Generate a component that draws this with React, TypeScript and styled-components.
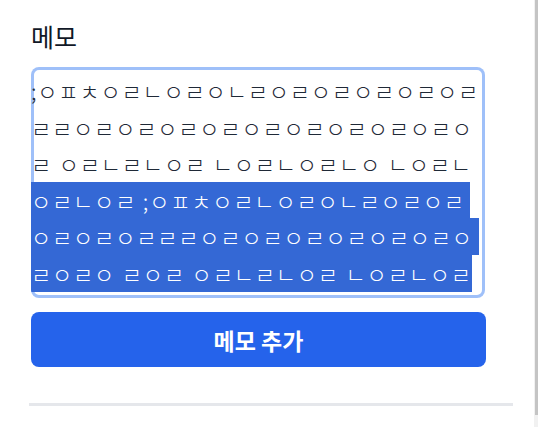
import { useLayoutEffect, useRef } from 'react';
import styled, { createGlobalStyle } from 'styled-components';

const GlobalStyle = createGlobalStyle`
  html {
    background: #fff;
  }
  body {
    margin: 0;
    font-family: "Noto Sans CJK KR", "Noto Sans", sans-serif;
    color: #111827;
  }
`;

const Shell = styled.div`
  display: flex;
  align-items: stretch;
`;

const Panel = styled.section`
  flex: 1;
  padding: 19px 21px 33px 29px;
`;

const ScrollTrack = styled.div`
  width: 4px;
  padding-left: 1px;
  box-sizing: border-box;
  background: #f1f1f1;
`;

const ScrollThumb = styled.div`
  height: 415px;
  background: #c4c4c4;
`;

const Form = styled.div`
  display: flex;
  flex-direction: column;
  width: 455px;
  padding-left: 2px;
`;

const Label = styled.label`
  display: block;
  font-size: 25px;
  line-height: 34px;
  font-weight: 400;
  color: #111827;
  margin-bottom: 14px;
`;

const MemoInput = styled.textarea`
  box-sizing: border-box;
  width: 454px;
  height: 231px;
  margin: 0;
  padding: 5px 0 0 0;
  border: none;
  border-radius: 8px;
  box-shadow: inset 0 0 0 3px #9fc0f9;
  outline: none;
  resize: none;
  overflow: hidden;
  font-family: "Noto Sans CJK KR", "Noto Sans", sans-serif;
  font-size: 22px;
  font-weight: 300;
  letter-spacing: 0.8px;
  word-spacing: 1px;
  line-height: 36.5px;
  color: #1f2937;
  background: #fff;

  &::selection {
    background: #3468d5;
    color: #fff;
  }
`;

const AddButton = styled.button`
  margin-top: 14px;
  width: 455px;
  height: 55px;
  border: none;
  border-radius: 8px;
  background: #2563eb;
  color: #fff;
  font-family: "Noto Sans CJK KR", "Noto Sans", sans-serif;
  font-size: 23px;
  font-weight: 700;
  cursor: pointer;
`;

const Divider = styled.hr`
  margin: 36px 0 0;
  width: 484px;
  height: 3px;
  border: none;
  background: #e5e7eb;
`;

const lines = [
  ';ㅇㅍㅊㅇㄹㄴㅇㄹㅇㄴㄹㅇㄹㅇㄹㅇㄹㅇㄹㅇㄹ',
  'ㄹㄹㅇㄹㅇㄹㅇㄹㅇㄹㅇㄹㅇㄹㅇㄹㅇㄹㅇㄹㅇ',
  'ㄹ ㅇㄹㄴㄹㄴㅇㄹ ㄴㅇㄹㄴㅇㄹㄴㅇ ㄴㅇㄹㄴ',
  'ㅇㄹㄴㅇㄹ ;ㅇㅍㅊㅇㄹㄴㅇㄹㅇㄴㄹㅇㄹㅇㄹ',
  'ㅇㄹㅇㄹㅇㄹㄹㄹㅇㄹㅇㄹㅇㄹㅇㄹㅇㄹㅇㄹㅇ',
  'ㄹㅇㄹㅇ ㄹㅇㄹ ㅇㄹㄴㄹㄴㅇㄹ ㄴㅇㄹㄴㅇㄹ',
];

const memo = lines.join('\n');
// selection starts at the 4th line
const selStart = lines.slice(0, 3).join('\n').length + 1;

const App = () => {
  const ref = useRef<HTMLTextAreaElement>(null);

  useLayoutEffect(() => {
    const el = ref.current;
    if (!el) return;
    el.focus({ preventScroll: true });
    el.setSelectionRange(selStart, memo.length);
  }, []);

  return (
    <>
      <GlobalStyle />
      <Shell>
        <Panel>
          <Form>
            <Label htmlFor="memo">메모</Label>
            <MemoInput id="memo" ref={ref} defaultValue={memo} spellCheck={false} />
            <AddButton type="button">메모 추가</AddButton>
          </Form>
          <Divider />
        </Panel>
        <ScrollTrack>
          <ScrollThumb />
        </ScrollTrack>
      </Shell>
    </>
  );
};

export default App;
